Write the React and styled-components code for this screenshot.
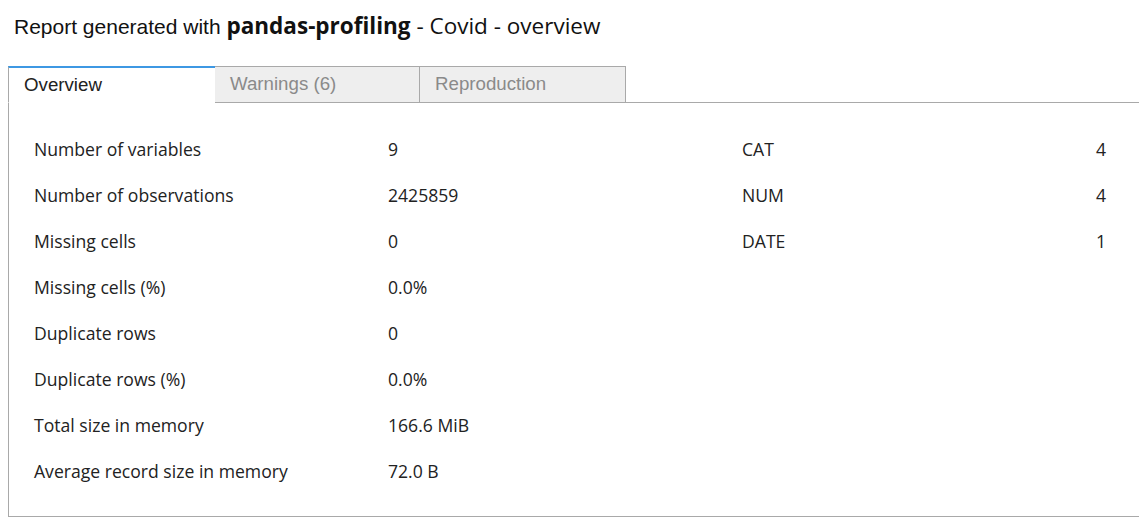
import React, { useState } from "react";
import styled, { createGlobalStyle } from "styled-components";

const GlobalStyle = createGlobalStyle`
  html, body {
    margin: 0;
    padding: 0;
    background: #fff;
    overflow: hidden;
  }
  body {
    font-family: "Open Sans", "Noto Sans", sans-serif;
    color: #222;
  }
`;

const overviewRows = [
  ["Number of variables", "9"],
  ["Number of observations", "2425859"],
  ["Missing cells", "0"],
  ["Missing cells (%)", "0.0%"],
  ["Duplicate rows", "0"],
  ["Duplicate rows (%)", "0.0%"],
  ["Total size in memory", "166.6 MiB"],
  ["Average record size in memory", "72.0 B"],
];

const typeRows = [
  ["CAT", "4"],
  ["NUM", "4"],
  ["DATE", "1"],
];

const tabs = [
  { label: "Overview", width: 207 },
  { label: "Warnings (6)", width: 205 },
  { label: "Reproduction", width: 206 },
];

const App = () => {
  const [active, setActive] = useState(0);

  return (
    <Page>
      <GlobalStyle />
      <Title>
        <Lead>Report generated with</Lead> <strong>pandas-profiling</strong> - Covid - overview
      </Title>
      <TabBar>
        {tabs.map((t, i) => (
          <Tab
            key={t.label}
            $active={i === active}
            $width={t.width}
            onClick={() => setActive(i)}
          >
            {t.label}
          </Tab>
        ))}
      </TabBar>
      <Panel>
        <StatsTable>
          {overviewRows.map(([label, value]) => (
            <Row key={label}>
              <Label>{label}</Label>
              <Value>{value}</Value>
            </Row>
          ))}
        </StatsTable>
        <TypesTable>
          {typeRows.map(([label, value]) => (
            <Row key={label}>
              <Label>{label}</Label>
              <Value $right>{value}</Value>
            </Row>
          ))}
        </TypesTable>
      </Panel>
    </Page>
  );
};

export default App;

const Page = styled.div`
  width: 1160px;
  padding: 0 8px;
`;

const Title = styled.h1`
  margin: 0;
  padding: 11px 0 0 6px;
  height: 66px;
  box-sizing: border-box;
  font-size: 22.5px;
  font-weight: 400;
  line-height: 30px;
  color: #111;

  strong {
    font-weight: 700;
  }
`;

const Lead = styled.span`
  font-family: "Liberation Sans", Arial, sans-serif;
  font-size: 21px;
`;

const TabBar = styled.div`
  display: flex;
  height: 36px;
  border-bottom: 1px solid #a9a9a9;
`;

const Tab = styled.div`
  width: ${(p) => p.$width}px;
  box-sizing: border-box;
  padding: 5px 15px 0;
  font-family: "Liberation Sans", Arial, sans-serif;
  font-size: 18.7px;
  line-height: 24px;
  cursor: pointer;
  background: ${(p) => (p.$active ? "#fff" : "#eeeeee")};
  color: ${(p) => (p.$active ? "#222" : "#8a8a8a")};
  border-left: ${(p) => (p.$active ? "1px solid #a9a9a9" : "none")};
  border-top: ${(p) => (p.$active ? "2px solid #3d98e3" : "1px solid #a9a9a9")};
  border-bottom: ${(p) => (p.$active ? "1px solid #fff" : "none")};
  border-right: ${(p) => (p.$active ? "none" : "1px solid #a9a9a9")};
  margin-bottom: ${(p) => (p.$active ? "-1px" : "0")};
  height: ${(p) => (p.$active ? "37px" : "36px")};
`;

const Panel = styled.div`
  display: flex;
  height: 414px;
  box-sizing: border-box;
  padding: 23px 0 0 25px;
  border-left: 1px solid #a9a9a9;
  border-bottom: 1px solid #a9a9a9;
`;

const StatsTable = styled.div`
  display: grid;
  grid-template-columns: 354px 354px;
  grid-auto-rows: 46px;
`;

const TypesTable = styled.div`
  display: grid;
  grid-template-columns: 1fr 1fr;
  grid-auto-rows: 46px;
  width: 372px;
  align-content: start;
`;

const Row = styled.div`
  display: contents;
`;

const Label = styled.div`
  display: flex;
  align-items: center;
  font-size: 17.6px;
  color: #222;
`;

const Value = styled.div`
  display: flex;
  align-items: center;
  justify-content: ${(p) => (p.$right ? "flex-end" : "flex-start")};
  padding-right: ${(p) => (p.$right ? "8px" : "0")};
  font-size: 17.6px;
  color: #222;
`;
